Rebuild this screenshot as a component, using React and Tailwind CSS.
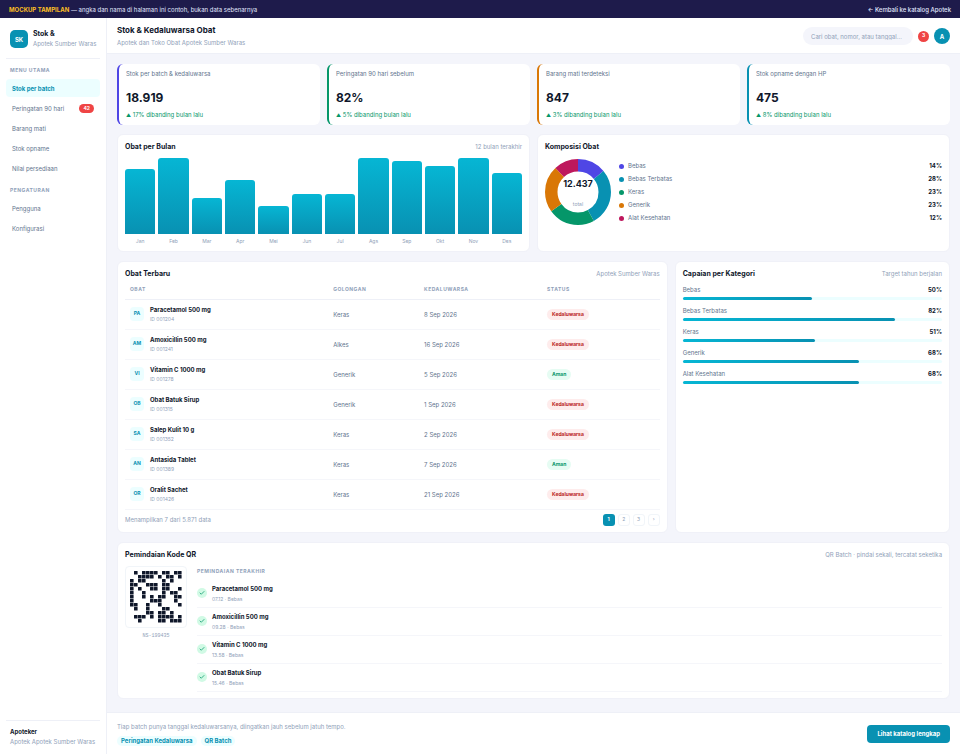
import { Check } from "lucide-react";

const MENU = [
  { label: "Stok per batch", active: true },
  { label: "Peringatan 90 hari", badge: 42 },
  { label: "Barang mati" },
  { label: "Stok opname" },
  { label: "Nilai persediaan" },
];

const SETTINGS = [{ label: "Pengguna" }, { label: "Konfigurasi" }];

const STATS = [
  { label: "Stok per batch & kedaluwarsa", value: "18.919", delta: "17%", border: "border-l-[#4f46e5]" },
  { label: "Peringatan 90 hari sebelum", value: "82%", delta: "5%", border: "border-l-[#059669]" },
  { label: "Barang mati terdeteksi", value: "847", delta: "3%", border: "border-l-[#d97706]" },
  { label: "Stok opname dengan HP", value: "475", delta: "8%", border: "border-l-[#0891b2]" },
];

const MONTHS = [
  ["Jan", 65],
  ["Feb", 76],
  ["Mar", 36],
  ["Apr", 54],
  ["Mei", 28],
  ["Jun", 40],
  ["Jul", 40],
  ["Ags", 76],
  ["Sep", 73],
  ["Okt", 68],
  ["Nov", 76],
  ["Des", 61],
];

const COMPOSITION = [
  { label: "Bebas", value: 14, color: "#4f46e5" },
  { label: "Bebas Terbatas", value: 28, color: "#0891b2" },
  { label: "Keras", value: 23, color: "#059669" },
  { label: "Generik", value: 23, color: "#d97706" },
  { label: "Alat Kesehatan", value: 12, color: "#be185d" },
];

const ROWS = [
  { code: "PA", name: "Paracetamol 500 mg", id: "001204", group: "Keras", date: "8 Sep 2026", expired: true },
  { code: "AM", name: "Amoxicillin 500 mg", id: "001241", group: "Alkes", date: "16 Sep 2026", expired: true },
  { code: "VI", name: "Vitamin C 1000 mg", id: "001278", group: "Generik", date: "5 Sep 2026", expired: false },
  { code: "OB", name: "Obat Batuk Sirup", id: "001315", group: "Generik", date: "1 Sep 2026", expired: true },
  { code: "SA", name: "Salep Kulit 10 g", id: "001352", group: "Keras", date: "2 Sep 2026", expired: true },
  { code: "AN", name: "Antasida Tablet", id: "001389", group: "Keras", date: "7 Sep 2026", expired: false },
  { code: "OR", name: "Oralit Sachet", id: "001426", group: "Keras", date: "21 Sep 2026", expired: true },
];

const TARGETS = [
  ["Bebas", 50],
  ["Bebas Terbatas", 82],
  ["Keras", 51],
  ["Generik", 68],
  ["Alat Kesehatan", 68],
];

const SCANS = [
  ["Paracetamol 500 mg", "07.12"],
  ["Amoxicillin 500 mg", "09.28"],
  ["Vitamin C 1000 mg", "13.58"],
  ["Obat Batuk Sirup", "15.46"],
];

const QR = [
  ".#.####.##.##",
  "..####.#.##.#",
  "#.##....#.#..",
  "##..###.##...",
  "#.#..##.##..#",
  "#..#....#.##.",
  "#..#.#.##..##",
  "#....###...#.",
  "##..#..#....#",
  ".#..#...##...",
  "....##.##.#..",
  ".###.#.####.#",
  "..#....##.###",
];

function Card({ title, note, className = "", children }) {
  return (
    <section className={`rounded-md border border-[#f0f1f8] bg-white px-[7px] pt-[7px] ${className}`}>
      <div className="flex items-center justify-between leading-[10px]">
        <h2 className="text-[7px] font-bold text-slate-900">{title}</h2>
        {note && <span className="text-[6px] text-slate-400">{note}</span>}
      </div>
      {children}
    </section>
  );
}

function NavItem({ label, active, badge }) {
  return (
    <a
      href="#"
      className={`flex h-[18px] items-center justify-between rounded px-[6px] ${
        active ? "bg-cyan-50 font-bold text-[#0891b2]" : "text-slate-500"
      }`}
    >
      {label}
      {badge && (
        <span className="rounded-full bg-[#ef4444] px-[4px] text-[5px] leading-[9px] font-bold text-white">{badge}</span>
      )}
    </a>
  );
}

function Sidebar() {
  return (
    <aside className="flex w-[107px] shrink-0 flex-col border-r border-[#eef0f7] bg-white px-[6px] text-[6px] whitespace-nowrap">
      <div className="flex items-center gap-[5px] border-b border-[#eef0f7] px-[4px] pt-[11px] pb-[9px]">
        <div className="flex size-[18px] shrink-0 items-center justify-center rounded-[5px] bg-[#0891b2] font-bold text-white">
          SK
        </div>
        <div>
          <p className="text-[7px] leading-[10px] font-bold text-slate-900">Stok &amp;</p>
          <p className="leading-[10px] text-slate-400">Apotek Sumber Waras</p>
        </div>
      </div>
      <nav className="flex flex-col gap-[2px] pt-[4px]">
        <p className="px-[4px] text-[5px] leading-[14px] font-bold tracking-widest text-slate-400">MENU UTAMA</p>
        {MENU.map((item) => (
          <NavItem key={item.label} {...item} />
        ))}
        <p className="px-[4px] pt-[4px] text-[5px] leading-[14px] font-bold tracking-widest text-slate-400">
          PENGATURAN
        </p>
        {SETTINGS.map((item) => (
          <NavItem key={item.label} {...item} />
        ))}
      </nav>
      <div className="mt-auto border-t border-[#eef0f7] px-[4px] pt-[6px] pb-[7px] leading-[10px]">
        <p className="font-bold text-slate-900">Apoteker</p>
        <p className="text-slate-400">Apotek Apotek Sumber Waras</p>
      </div>
    </aside>
  );
}

function Header() {
  return (
    <header className="flex items-center justify-between border-b border-[#eef0f7] bg-white px-[10px] pt-[6px] pb-[5px]">
      <div>
        <h1 className="text-[8px] leading-[13px] font-bold text-slate-900">Stok &amp; Kedaluwarsa Obat</h1>
        <p className="text-[6px] leading-[11px] text-slate-400">Apotek dan Toko Obat Apotek Sumber Waras</p>
      </div>
      <div className="flex items-center gap-[5px]">
        <input
          type="text"
          aria-label="Cari"
          placeholder="Cari obat, nomor, atau tanggal..."
          className="h-[18px] w-[110px] rounded-full bg-[#f4f5fb] px-[8px] text-[6px] outline-none placeholder:text-slate-400"
        />
        <span className="flex size-[11px] items-center justify-center rounded-full bg-[#ef4444] text-[5px] font-bold text-white">
          3
        </span>
        <span className="flex size-[16px] items-center justify-center rounded-full bg-[#0891b2] text-[6px] font-bold text-white">
          A
        </span>
      </div>
    </header>
  );
}

function Donut() {
  let start = 0;
  return (
    <div className="relative size-[66px] shrink-0">
      <svg viewBox="0 0 66 66" className="size-full -rotate-90">
        {COMPOSITION.map(({ label, value, color }) => {
          const offset = -start;
          start += value;
          return (
            <circle
              key={label}
              cx="33"
              cy="33"
              r="26.75"
              fill="none"
              stroke={color}
              strokeWidth="12.5"
              pathLength="100"
              strokeDasharray={`${value} ${100 - value}`}
              strokeDashoffset={offset}
            />
          );
        })}
      </svg>
      <div className="absolute inset-0 flex flex-col items-center justify-between pt-[19px] pb-[16px]">
        <strong className="text-[9px] leading-[12px] font-bold text-slate-900">12.437</strong>
        <span className="text-[5px] leading-[10px] text-slate-400">total</span>
      </div>
    </div>
  );
}

function MedicineTable() {
  return (
    <Card title="Obat Terbaru" note="Apotek Sumber Waras" className="pb-[6px]">
      <table className="mt-[2px] w-full text-left text-[6px] text-slate-500">
        <thead>
          <tr className="border-b border-[#eef0f7] text-[5px] tracking-widest text-slate-400">
            <th className="h-[18px] w-[38%] px-[5px] font-bold">OBAT</th>
            <th className="w-[17%] px-[5px] font-bold">GOLONGAN</th>
            <th className="w-[23%] px-[5px] font-bold">KEDALUWARSA</th>
            <th className="w-[22%] px-[5px] font-bold">STATUS</th>
          </tr>
        </thead>
        <tbody>
          {ROWS.map((row) => (
            <tr key={row.id} className="border-b border-[#f5f6fa]">
              <td className="px-[5px] py-[6px]">
                <div className="flex items-center gap-[6px]">
                  <span className="flex size-[14px] items-center justify-center rounded bg-cyan-50 text-[5px] font-bold text-[#0891b2]">
                    {row.code}
                  </span>
                  <div>
                    <p className="leading-[8px] font-bold text-slate-900">{row.name}</p>
                    <p className="pt-px text-[5px] leading-[8px] text-slate-400">ID {row.id}</p>
                  </div>
                </div>
              </td>
              <td className="px-[5px]">{row.group}</td>
              <td className="px-[5px]">{row.date}</td>
              <td className="px-[5px]">
                <span
                  className={`inline-block rounded-full px-[5px] text-[5px] leading-[11px] font-bold ${
                    row.expired ? "bg-[#feecec] text-[#b91c1c]" : "bg-[#e6fcf3] text-[#059669]"
                  }`}
                >
                  {row.expired ? "Kedaluwarsa" : "Aman"}
                </span>
              </td>
            </tr>
          ))}
        </tbody>
      </table>
      <div className="flex items-center justify-between pt-[4px]">
        <span className="text-[6px] text-slate-400">Menampilkan 7 dari 5.871 data</span>
        <div className="flex gap-[3px] text-[5px] text-slate-400">
          <button className="size-[12px] rounded-[3px] bg-[#0891b2] font-bold text-white">1</button>
          <button className="size-[12px] rounded-[3px] border border-slate-100">2</button>
          <button className="size-[12px] rounded-[3px] border border-slate-100">3</button>
          <button className="size-[12px] rounded-[3px] border border-slate-100">›</button>
        </div>
      </div>
    </Card>
  );
}

function QrCode() {
  return (
    <svg viewBox="0 0 52 52" className="size-[52px]" fill="#0f172a">
      {QR.map((line, y) =>
        [...line].map((cell, x) =>
          cell === "#" ? <rect key={`${x}-${y}`} x={x * 4} y={y * 4} width="3.6" height="3.6" rx="0.3" /> : null
        )
      )}
    </svg>
  );
}

export default function App() {
  return (
    <div className="flex min-h-screen flex-col bg-[#f4f5fb] font-['Inter','Liberation_Sans',sans-serif]">
      <div className="flex h-[18px] shrink-0 items-center justify-between bg-[#1e1b4b] px-[9px] text-[6px] text-[#e0e7ff]">
        <p>
          <strong className="font-bold text-[#fbbf24]">MOCKUP TAMPILAN</strong> — angka dan nama di halaman ini contoh,
          bukan data sebenarnya
        </p>
        <a href="#" className="font-medium">
          ← Kembali ke katalog Apotek
        </a>
      </div>

      <div className="flex grow">
        <Sidebar />
        <div className="flex min-w-0 grow flex-col">
          <Header />

          <main className="flex grow flex-col gap-[9px] px-[10px] pt-[10px] pb-[12px]">
            <div className="grid grid-cols-4 gap-[7px]">
              {STATS.map((stat) => (
                <div
                  key={stat.label}
                  className={`rounded-md border-l-2 bg-white py-[5px] pl-[7px] ${stat.border}`}
                >
                  <p className="text-[6px] leading-[10px] text-slate-500">{stat.label}</p>
                  <p className="pt-[10px] text-[12px] leading-[18px] font-bold text-slate-900">{stat.value}</p>
                  <p className="pt-[3px] text-[6px] leading-[10px] text-[#059669]">
                    <span className="text-[5px]">▲</span> {stat.delta} dibanding bulan lalu
                  </p>
                </div>
              ))}
            </div>

            <div className="grid grid-cols-2 gap-[7px]">
              <Card title="Obat per Bulan" note="12 bulan terakhir" className="pb-[6px]">
                <div className="flex items-end gap-[3px] pt-[6px]">
                  {MONTHS.map(([month, height]) => (
                    <div key={month} className="flex flex-1 flex-col">
                      <div
                        className="rounded-t-[3px] bg-linear-to-b from-[#06b6d4] to-[#0891b2]"
                        style={{ height }}
                      />
                      <span className="pt-[3px] text-center text-[5px] leading-[8px] text-slate-400">{month}</span>
                    </div>
                  ))}
                </div>
              </Card>
              <Card title="Komposisi Obat">
                <div className="flex items-center gap-[8px] pt-[7px]">
                  <Donut />
                  <ul className="flex grow flex-col gap-[3px] text-[6px] leading-[10px]">
                    {COMPOSITION.map(({ label, value, color }) => (
                      <li key={label} className="flex items-center gap-[4px] text-slate-500">
                        <span className="size-[5px] rounded-full" style={{ backgroundColor: color }} />
                        {label}
                        <span className="ml-auto font-bold text-slate-900">{value}%</span>
                      </li>
                    ))}
                  </ul>
                </div>
              </Card>
            </div>

            <div className="grid grid-cols-[2fr_1fr] gap-[7px]">
              <MedicineTable />
              <Card title="Capaian per Kategori" note="Target tahun berjalan">
                <div className="flex flex-col gap-[6px] pt-[6px] text-[6px] leading-[9px]">
                  {TARGETS.map(([label, value]) => (
                    <div key={label}>
                      <div className="flex justify-between text-slate-500">
                        {label}
                        <span className="font-bold text-slate-900">{value}%</span>
                      </div>
                      <div className="mt-[3px] h-[3px] rounded-full bg-cyan-50">
                        <div
                          className="h-full rounded-full bg-linear-to-r from-[#06b6d4] to-[#0891b2]"
                          style={{ width: `${value}%` }}
                        />
                      </div>
                    </div>
                  ))}
                </div>
              </Card>
            </div>

            <Card title="Pemindaian Kode QR" note="QR Batch · pindai sekali, tercatat seketika" className="pb-[6px]">
              <div className="flex items-start gap-[10px] pt-[6px]">
                <div className="text-center">
                  <div className="rounded border border-slate-100 p-[4px]">
                    <QrCode />
                  </div>
                  <p className="pt-[3px] font-['Liberation_Mono',monospace] text-[5px] leading-[10px] text-slate-400">
                    NS-199435
                  </p>
                </div>
                <div className="grow">
                  <p className="text-[5px] leading-[10px] font-bold tracking-widest text-slate-400">
                    PEMINDAIAN TERAKHIR
                  </p>
                  <ul className="pt-[4px]">
                    {SCANS.map(([name, time]) => (
                      <li key={name} className="flex items-center gap-[5px] border-b border-[#f5f6fa] py-[3px]">
                        <span className="flex size-[10px] items-center justify-center rounded-full bg-[#d1fae5] text-[#059669]">
                          <Check size={6} strokeWidth={3} />
                        </span>
                        <div>
                          <p className="text-[6px] leading-[11px] font-bold text-slate-900">{name}</p>
                          <p className="text-[5px] leading-[10px] text-slate-400">{time} · Bebas</p>
                        </div>
                      </li>
                    ))}
                  </ul>
                </div>
              </div>
            </Card>
          </main>

          <footer className="flex items-center justify-between border-t border-[#eef0f7] bg-white px-[10px] py-[8px]">
            <div>
              <p className="text-[6px] leading-[12px] text-slate-400">
                Tiap batch punya tanggal kedaluwarsanya, diingatkan jauh sebelum jatuh tempo.
              </p>
              <div className="flex gap-[4px] pt-[3px] text-[6px] leading-[10px] font-bold text-[#0891b2]">
                <span className="rounded-full bg-cyan-50 px-[4px]">Peringatan Kedaluwarsa</span>
                <span className="rounded-full bg-cyan-50 px-[4px]">QR Batch</span>
              </div>
            </div>
            <a
              href="#"
              className="rounded-[4px] bg-[#0891b2] px-[10px] text-[6px] leading-[18px] font-bold text-white"
            >
              Lihat katalog lengkap
            </a>
          </footer>
        </div>
      </div>
    </div>
  );
}
